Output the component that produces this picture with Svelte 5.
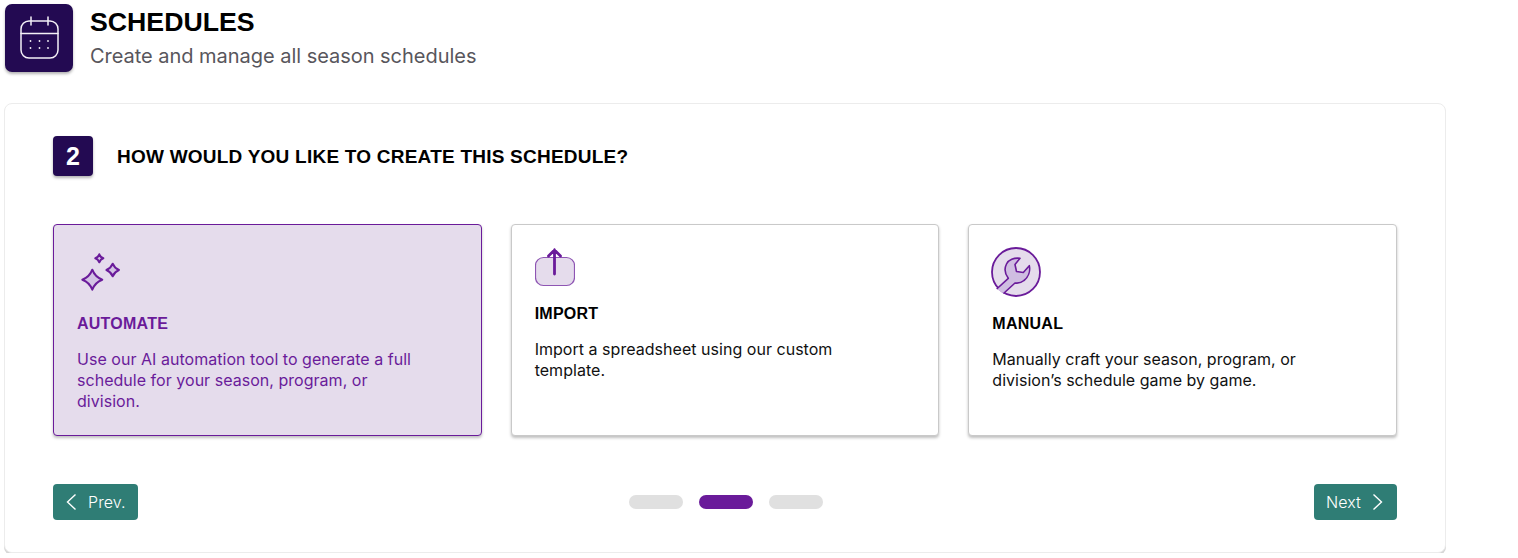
<script>
  const dots = [false, true, false];
</script>

<div class="page">
  <header class="head">
    <div class="logo">
      <svg width="68" height="68" viewBox="0 0 68 68" fill="none" stroke="#f4f1f7" stroke-width="1.5" stroke-linecap="round">
        <rect x="16" y="17" width="37" height="37" rx="8" />
        <path d="M16 29.5H53M26 13V21M43 13V21" />
        <g fill="#f4f1f7" stroke="none">
          <circle cx="25.5" cy="37" r=".9" /><circle cx="34.5" cy="37" r=".9" /><circle cx="43" cy="37" r=".9" />
          <circle cx="25.5" cy="44" r=".9" /><circle cx="34.5" cy="44" r=".9" /><circle cx="43" cy="44" r=".9" />
        </g>
      </svg>
    </div>
    <div>
      <h1>SCHEDULES</h1>
      <p class="sub">Create and manage all season schedules</p>
    </div>
  </header>

  <section class="card">
    <div class="step">
      <span class="num">2</span>
      <h2>HOW WOULD YOU LIKE TO CREATE THIS SCHEDULE?</h2>
    </div>

    <div class="options">
      <div class="option active">
        <svg class="icon" width="50" height="50" viewBox="0 0 50 50" fill="#d3c3e4" stroke="#6a1b9a" stroke-width="2" stroke-linejoin="round">
          <path d="M15.3 22.7Q18 30 25.3 32.7Q18 35.4 15.3 42.7Q12.6 35.4 5.3 32.7Q12.6 30 15.3 22.7Z" />
          <path d="M35.7 16.7Q37.5 21.2 42 23Q37.5 24.8 35.7 29.3Q33.9 24.8 29.4 23Q33.9 21.2 35.7 16.7Z" />
          <path d="M22.3 7.3Q23.4 10.2 26.3 11.3Q23.4 12.4 22.3 15.3Q21.2 12.4 18.3 11.3Q21.2 10.2 22.3 7.3Z" />
        </svg>
        <h3>AUTOMATE</h3>
        <p>Use our AI automation tool to generate a full schedule for your season, program, or division.</p>
      </div>

      <div class="option">
        <svg class="icon" width="40" height="40" viewBox="0 0 40 40" fill="none">
          <rect x="0.5" y="10.5" width="39" height="28" rx="8" fill="#e5dcec" stroke="#8e55b3" stroke-width="1.2" />
          <path d="M19.5 27V3M13.5 9L19.5 3L25.5 9" stroke="#6a1b9a" stroke-width="2.8" stroke-linecap="round" />
        </svg>
        <h3>IMPORT</h3>
        <p>Import a spreadsheet using our custom template.</p>
      </div>

      <div class="option">
        <svg class="icon wrench" width="50" height="50" viewBox="0 0 50 50">
          <circle cx="25" cy="25" r="24" fill="#e5dcec" stroke="#6a1b9a" stroke-width="1.8" />
          <path d="M5.7 42L17.3 31.3C14 27 13 22 15.5 17C17.5 13 23 10.5 29 11.3L24 17.5L25.5 24.5L32.3 25.5L38.3 18.7C39.5 24 37.5 30 33 33.5C30 36 27 36.5 24 36L12.5 46.5" fill="#cfbde1" stroke="#6a1b9a" stroke-width="1.6" stroke-linejoin="round" />
        </svg>
        <h3>MANUAL</h3>
        <p>Manually craft your season, program, or division’s schedule game by game.</p>
      </div>
    </div>

    <div class="foot">
      <button class="btn">
        <svg width="12" height="18" viewBox="0 0 12 18" fill="none" stroke="#fff" stroke-width="1.4"><path d="M10.5 1.5L2.5 9L10.5 16.5" /></svg>
        Prev.
      </button>
      <div class="dots">
        {#each dots as on}
          <span class="dot" class:on></span>
        {/each}
      </div>
      <button class="btn next">
        Next
        <svg width="12" height="18" viewBox="0 0 12 18" fill="none" stroke="#fff" stroke-width="1.4"><path d="M1.5 1.5L9.5 9L1.5 16.5" /></svg>
      </button>
    </div>
  </section>
</div>

<style>
  :global(body) {
    margin: 0;
    background: #fff;
  }
  .page {
    padding: 4px 0 0 4px;
    font-family: Inter, "Liberation Sans", sans-serif;
    color: #111;
  }
  .head {
    display: flex;
    gap: 17px;
    padding-left: 1px;
  }
  .logo {
    width: 68px;
    height: 68px;
    background: #230a52;
    border-radius: 7px;
    box-shadow: 0 2px 3px rgba(0, 0, 0, 0.3);
  }
  .logo svg {
    display: block;
  }
  h1 {
    margin: 0;
    font: 700 26.7px/36px "Liberation Sans", sans-serif;
    color: #000;
  }
  .sub {
    margin: 2px 0 0;
    font-size: 20px;
    line-height: 28px;
    letter-spacing: -0.03px;
    color: #58565c;
  }
  .card {
    box-sizing: border-box;
    width: 1442px;
    height: 450px;
    margin-top: 31px;
    padding: 32px 48px;
    background: #fff;
    border: 1px solid #ececec;
    border-radius: 8px;
    box-shadow: 0 2px 0 #d6d6d6;
  }
  .step {
    display: flex;
    align-items: center;
    gap: 24px;
  }
  .num {
    width: 40px;
    height: 40px;
    display: flex;
    align-items: center;
    justify-content: center;
    background: #230a52;
    border-radius: 4px;
    color: #fff;
    font: 700 25px "Liberation Sans", sans-serif;
    box-shadow: 0 2px 3px rgba(0, 0, 0, 0.3);
  }
  h2 {
    margin: 2px 0 0;
    font: 700 19px/24px "Liberation Sans", sans-serif;
    letter-spacing: 0.23px;
    color: #000;
  }
  .options {
    display: grid;
    grid-template-columns: repeat(3, 1fr);
    gap: 29px;
    margin-top: 48px;
  }
  .option {
    box-sizing: border-box;
    height: 212px;
    padding: 22px 23px;
    background: #fff;
    border: 1px solid #c9c9c9;
    border-radius: 4px;
    box-shadow: 0 2px 3px rgba(0, 0, 0, 0.25);
  }
  .option.active {
    background: #e5dcec;
    border-color: #6a1b9a;
    color: #6a1b9a;
  }
  .icon {
    display: block;
  }
  .wrench {
    margin-left: -1px;
  }
  h3 {
    margin: 18px 0 0;
    font: 700 16px/18px "Liberation Sans", sans-serif;
    letter-spacing: 0.25px;
    color: #000;
  }
  .active h3 {
    color: #6a1b9a;
  }
  .option p {
    margin: 16px 0 0;
    max-width: 345px;
    font-size: 16px;
    line-height: 21px;
    letter-spacing: 0.03px;
  }
  .foot {
    display: flex;
    align-items: center;
    justify-content: space-between;
    margin-top: 48px;
  }
  .btn {
    display: flex;
    align-items: center;
    height: 36px;
    padding: 0 12px;
    gap: 11px;
    background: #2f7d75;
    border: 0;
    border-radius: 4px;
    color: #fff;
    font: 300 16px Inter, sans-serif;
    letter-spacing: 0.1px;
  }
  .next {
    padding-right: 13px;
  }
  .dots {
    display: flex;
    gap: 16px;
  }
  .dot {
    width: 54px;
    height: 14px;
    border-radius: 7px;
    background: #e0e0e0;
  }
  .dot.on {
    background: #6a1b9a;
  }
</style>
